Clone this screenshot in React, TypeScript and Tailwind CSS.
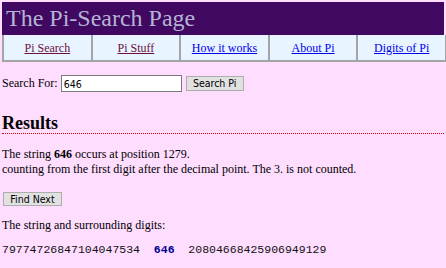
import React from 'react';

const navItems = [
    { label: 'Pi Search', visited: true },
    { label: 'Pi Stuff', visited: true },
    { label: 'How it works', visited: false },
    { label: 'About Pi', visited: false },
    { label: 'Digits of Pi', visited: false },
];

const App: React.FC = () => {
    return (
        <div className="min-h-screen w-full overflow-hidden bg-[#ffddff] p-[2px] font-['Liberation_Serif','Times_New_Roman',serif] text-[12px] leading-[15px] text-black">
            {/* title bar */}
            <div className="h-[33px] whitespace-nowrap bg-[#400860] pl-[4px] text-[24px] leading-[33px] text-[#b4b4d4]">
                The Pi-Search Page
            </div>

            {/* nav table */}
            <nav className="flex w-max border-b-2 border-l-2 border-[#a4a4a4] bg-[#e8f4ff]">
                {navItems.map(item => (
                    <div
                        key={item.label}
                        className="flex h-[25px] w-[88.6px] items-center justify-center border-r-2 border-[#a4a4a4] pt-[2px]"
                    >
                        <a
                            href="#"
                            className={item.visited ? 'text-[#6b1040] underline' : 'text-[#0000ee] underline'}
                        >
                            {item.label}
                        </a>
                    </div>
                ))}
            </nav>

            {/* search form */}
            <div className="mt-[13px] flex items-center">
                <span>Search For:</span>
                <input
                    type="text"
                    defaultValue="646"
                    className="ml-[3px] h-[17px] w-[121px] border border-[#7a7a7a] bg-white px-[2px] font-['DejaVu_Sans_Condensed','Liberation_Sans',sans-serif] text-[10.5px] text-black outline-none"
                />
                <button className="ml-[4px] h-[15px] w-[58px] border border-[#adadad] bg-[#e1e1e1] font-['DejaVu_Sans_Condensed','Liberation_Sans',sans-serif] text-[10.5px] leading-none text-black">
                    Search Pi
                </button>
            </div>

            <h2 className="mt-[21px] border-b border-dotted border-[#e00000] text-[18px] font-bold leading-[20px]">
                Results
            </h2>

            <p className="mt-[13px]">
                The string <b>646</b> occurs at position 1279.
                <br />
                counting from the first digit after the decimal point. The 3. is not counted.
            </p>

            <button className="ml-[1px] mt-[15px] block h-[14px] w-[59px] border border-[#adadad] bg-[#e1e1e1] font-['DejaVu_Sans_Condensed','Liberation_Sans',sans-serif] text-[10.5px] leading-none text-black">
                Find Next
            </button>

            <p className="mt-[12px]">The string and surrounding digits:</p>

            <p className="mt-[10px] whitespace-pre font-['Liberation_Mono','Courier_New',monospace] text-[11.5px] leading-[13px] text-[#111]">
                {'79774726847104047534  '}
                <b className="text-[#000090]">646</b>
                {'  20804668425906949129'}
            </p>
        </div>
    );
};

export default App;
